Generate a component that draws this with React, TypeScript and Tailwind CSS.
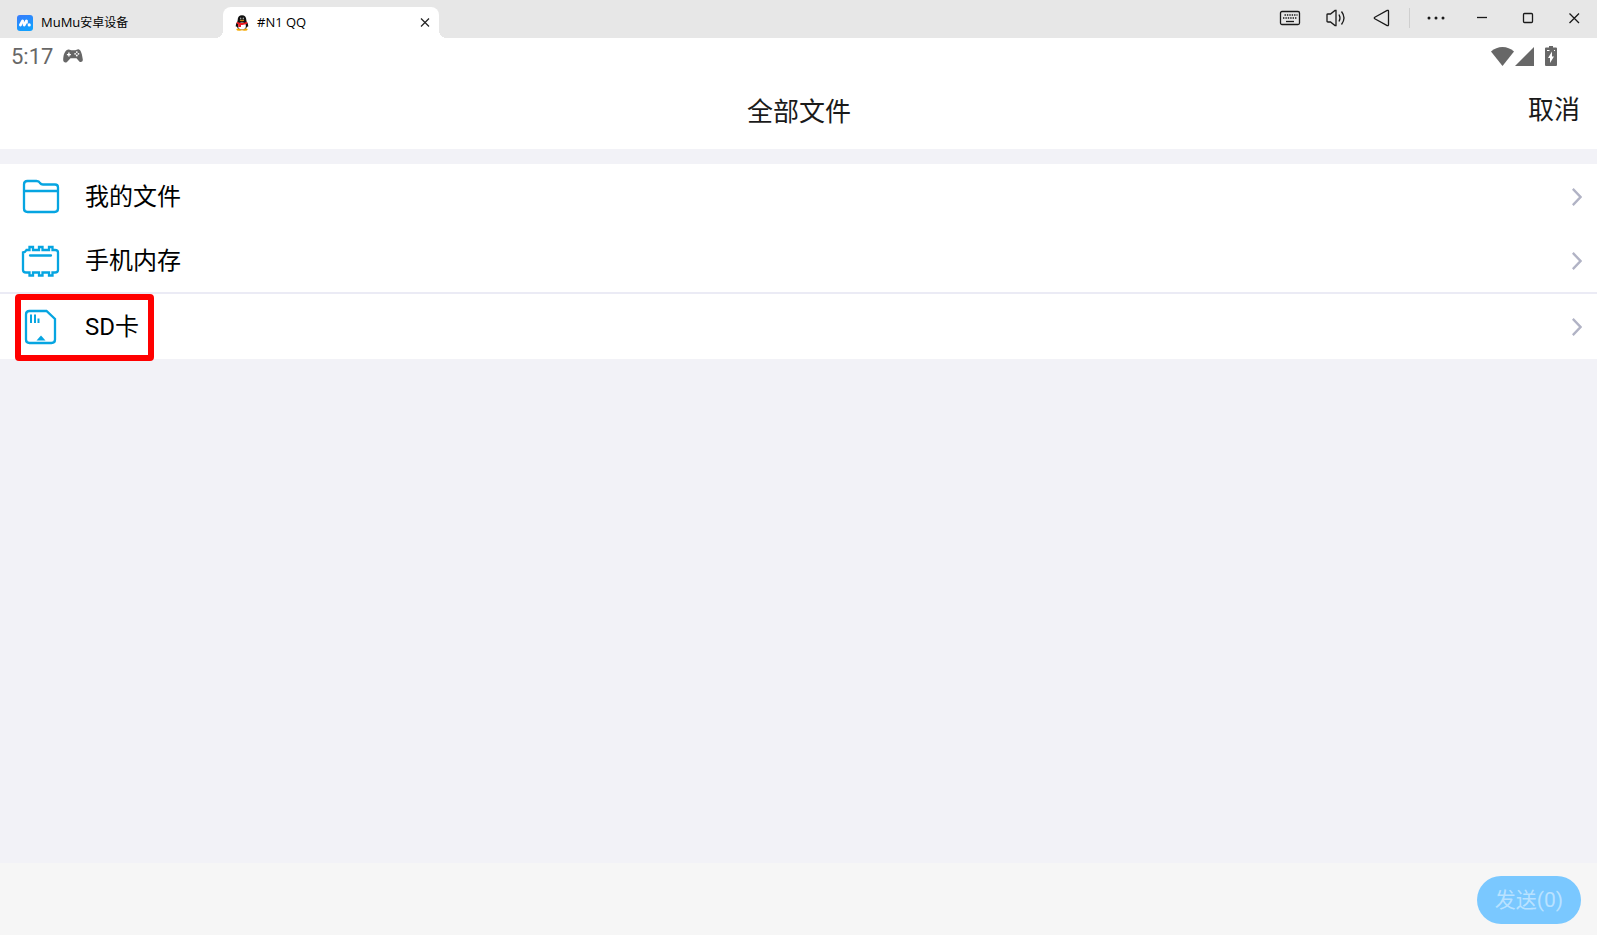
import type { ReactNode } from "react";

type FileEntry = {
  label: string;
  icon: ReactNode;
  divider?: boolean;
  highlighted?: boolean;
};

function MuMuLogo() {
  return (
    <svg width="16" height="16" viewBox="0 0 16 16" aria-hidden="true">
      <defs>
        <linearGradient id="mumu" x1="0" y1="0" x2="0.4" y2="1">
          <stop offset="0" stopColor="#3a7bfb" />
          <stop offset="1" stopColor="#12a0ff" />
        </linearGradient>
      </defs>
      <rect width="16" height="16" rx="3" fill="url(#mumu)" />
      <path d="M3.4 10L5.6 6M7.2 10L9.4 6" stroke="#fff" strokeWidth="2.8" strokeLinecap="round" />
      <path d="M5.8 5.500L7 10M9.600 5.500L10.400 8.500" stroke="#fff" strokeWidth="1.200" />
      <circle cx="12.2" cy="9.9" r="1.6" fill="#fff" />
    </svg>
  );
}

function PenguinLogo() {
  return (
    <svg width="14" height="16" viewBox="0 0 14 16" aria-hidden="true">
      <path d="M2.4 7C1.2 8.4.6 10 .8 11.6c.3.7 1-.2 1.4-.8M11.6 7c1.2 1.4 1.8 3 1.6 4.6-.3.7-1-.2-1.4-.8" fill="#111" />
      <ellipse cx="4.3" cy="14.5" rx="3" ry="1.3" fill="#f5a800" />
      <ellipse cx="9.7" cy="14.5" rx="3" ry="1.3" fill="#f5a800" />
      <path d="M7 .3c-2.800 0-4.300 2-4.300 4.400 0 1-.3 1.800-.8 2.800-1.600 4 1 7 5.100 7s6.700-3 5.100-7c-.5-1-.8-1.800-.8-2.800C11.300 2.300 9.800.3 7 .3z" fill="#111" />
      <ellipse cx="7" cy="11" rx="3.900" ry="3.400" fill="#fff" />
      <ellipse cx="5.700" cy="3.400" rx=".7" ry="1" fill="#aaa" />
      <ellipse cx="8.300" cy="3.400" rx=".7" ry="1" fill="#aaa" />
      <ellipse cx="7" cy="5.500" rx="2.300" ry=".8" fill="#c98a10" />
      <path d="M2 6.700c3.200 1.600 6.800 1.600 10 0l.5 1.900c-2.400 1.200-4.500 1.500-6.500 1.300v2H3.200V9.300L1.600 8.500z" fill="#ee1b23" />
    </svg>
  );
}

function GamepadIcon() {
  return (
    <svg width="20" height="14" viewBox="0 0 20 14" aria-hidden="true">
      <path
        d="M4.600.8C6 .2 7 1.300 8.300 1.200h4C13.500 1.200 14.500-.3 16 .5c2.300 1 3.200 5.500 3.800 10 .2 2.200-2 3.300-3.500 2L13.500 9.200h-6L4 12.900C2.300 14.300 0 13 .2 10.700.3 6.800 1.300 2 4.600.8z"
        fill="#676767"
      />
      <path d="M5.900 3.600v4M3.900 5.600h4" stroke="#fff" strokeWidth="1.400" />
      <circle cx="13.800" cy="3.100" r=".9" fill="#fff" />
      <circle cx="13.800" cy="6.500" r=".9" fill="#fff" />
      <circle cx="12.100" cy="4.800" r=".9" fill="#fff" />
      <circle cx="15.500" cy="4.800" r=".9" fill="#fff" />
    </svg>
  );
}

function FolderIcon() {
  return (
    <svg width="40" height="36" viewBox="0 0 40 36" fill="none" stroke="#06a5e1" strokeWidth="2.300" aria-hidden="true">
      <path d="M3 29.500V5.500Q3 2 6.500 2H15.500Q18 2 19 4Q20 5.500 22 5.500H34Q37 5.500 37 8.500V29.500Q37 33 33.500 33H6.500Q3 33 3 29.500Z" />
      <path d="M3 12H37" />
    </svg>
  );
}

function MemoryIcon() {
  return (
    <svg width="40" height="36" viewBox="0 0 40 36" fill="none" stroke="#06a5e1" strokeWidth="2.300" aria-hidden="true">
      <path d="M8 7H5.500Q4.500 9 2 9.500V27Q2 29.500 5 29.500H8.500V32.500H12V29.500H18V32.500H21.500V29.500H28V32.500H31.500V29.500H34Q37 29.500 37 27V9.500Q37 7 34 7H31.500V4H28V7H21.500V4H18V7H12V4H8.500V7Z" />
      <path d="M9 12.500H30" strokeLinecap="round" />
    </svg>
  );
}

function SdCardIcon() {
  return (
    <svg width="40" height="36" viewBox="0 0 40 36" fill="none" stroke="#06a5e1" strokeWidth="2.300" aria-hidden="true">
      <path d="M8.500 2H25.500L34 10V30.500Q34 34 30.500 34H8.500Q5 34 5 30.500V5.500Q5 2 8.500 2Z" />
      <path d="M10 5.500V14M14 5.500V14M17.500 9.500V14" strokeWidth="2" />
      <path d="M20 26.500L24.500 31.500H15.500Z" fill="#06a5e1" stroke="none" />
    </svg>
  );
}

function ChevronIcon() {
  return (
    <svg width="10" height="18" viewBox="0 0 10 18" fill="none" stroke="#b1b3c5" strokeWidth="2.400" aria-hidden="true">
      <path d="M.8.900L8.500 9L.8 17.100" />
    </svg>
  );
}

const deviceControls = [
  {
    label: "键盘",
    icon: (
      <>
        <rect x="2.500" y="5.500" width="19" height="13" rx="1.500" />
        <path d="M6.500 9h13" strokeWidth="1.600" strokeDasharray="1.400 1" />
        <path d="M5 12h14" strokeWidth="1.600" strokeDasharray="1.400 1" />
        <path d="M8 15.500h8" />
      </>
    ),
  },
  {
    label: "音量",
    icon: (
      <>
        <path d="M3 8.500V15.500Q3 16 4 16H6.500L11 19.500H12V4.500H11L6.500 8H4Q3 8 3 8.500Z" />
        <path d="M15 8.500Q17 12 15 15.500M17.500 5.500Q22.500 12 17.500 18.500" />
      </>
    ),
  },
  {
    label: "返回",
    icon: <path d="M4.800 11.200L17.200 4.400Q18.500 4 18.500 5.200V18.800Q18.500 20 17.200 19.600L4.800 12.800Q3.800 12 4.800 11.200Z" />,
  },
];

const windowControls = [
  {
    label: "更多",
    icon: (
      <g fill="#1a1a1a" stroke="none">
        <circle cx="5" cy="12" r="1.500" />
        <circle cx="12" cy="12" r="1.500" />
        <circle cx="19" cy="12" r="1.500" />
      </g>
    ),
  },
  { label: "最小化", icon: <path d="M7 11.500H17" /> },
  { label: "最大化", icon: <rect x="7.500" y="7.500" width="9" height="9" rx="1" /> },
  { label: "关闭", icon: <path d="M7.500 7.500L17 17M17 7.500L7.500 17" /> },
];

const entries: FileEntry[] = [
  { label: "我的文件", icon: <FolderIcon /> },
  { label: "手机内存", icon: <MemoryIcon />, divider: true },
  { label: "SD卡", icon: <SdCardIcon />, highlighted: true },
];

function ControlButton({ label, children }: { label: string; children: ReactNode }) {
  return (
    <button type="button" aria-label={label} className="flex h-9 w-[46px] items-center justify-center">
      <svg width="24" height="24" viewBox="0 0 24 24" fill="none" stroke="#1a1a1a" strokeWidth="1.300" aria-hidden="true">
        {children}
      </svg>
    </button>
  );
}

function TitleBar() {
  return (
    <div className="flex h-[38px] justify-between bg-[#e7e7e7] font-['Open_Sans','Noto_Sans_CJK_SC',sans-serif] text-black">
      <div className="flex items-end">
        <button type="button" className="flex h-[31px] w-[223px] items-center gap-2 pl-[17px] text-xs">
          <MuMuLogo />
          <span>
            <span className="text-[13px]">MuMu</span>安卓设备
          </span>
        </button>
        <div className="relative flex h-[31px] w-[216px] items-center justify-between rounded-t-lg bg-white pr-2 pl-3">
          <span className="absolute bottom-0 -left-2 size-2 bg-[radial-gradient(circle_at_0_0,transparent_8px,white_8px)]" />
          <span className="absolute -right-2 bottom-0 size-2 bg-[radial-gradient(circle_at_100%_0,transparent_8px,white_8px)]" />
          <button type="button" className="flex items-center gap-2 text-[13px]">
            <PenguinLogo />
            <span>#N1 QQ</span>
          </button>
          <button type="button" aria-label="关闭标签">
            <svg width="12" height="12" viewBox="0 0 12 12" stroke="#222" strokeWidth="1.200" aria-hidden="true">
              <path d="M2 1.500L10 9.500M10 1.500L2 9.500" />
            </svg>
          </button>
        </div>
      </div>

      <div className="flex items-start">
        {deviceControls.map(({ label, icon }) => (
          <ControlButton key={label} label={label}>
            {icon}
          </ControlButton>
        ))}
        <span className="mr-[3px] ml-1 mt-2 h-5 w-px bg-[#cfcfcf]" />
        {windowControls.map(({ label, icon }) => (
          <ControlButton key={label} label={label}>
            {icon}
          </ControlButton>
        ))}
      </div>
    </div>
  );
}

function StatusBar() {
  return (
    <div className="flex h-9 items-center justify-between bg-white pr-10 pl-[11px] text-[#676767]">
      <div className="flex items-center gap-[10px]">
        <span className="pt-px text-[22px] leading-9">5:17</span>
        <GamepadIcon />
      </div>
      <div className="flex items-center gap-px pb-px">
        <svg width="23" height="20" viewBox="0 0 23 20" fill="#676767" aria-hidden="true">
          <path d="M11.500 20L0 5.500Q5 1 11.500 1T23 5.500Z" />
        </svg>
        <svg width="19" height="20" viewBox="0 0 19 20" fill="#676767" aria-hidden="true">
          <path d="M0 20H19V1Z" />
        </svg>
        <svg width="12" height="20" viewBox="0 0 12 20" fill="#676767" className="ml-[10px]" aria-hidden="true">
          <path d="M4 0H8V1.500H11Q12 1.500 12 2.500V19Q12 20 11 20H1Q0 20 0 19V2.500Q0 1.500 1 1.500H4Z" />
          <path d="M7 5.500V10.500H9L5 17V12H3Z" fill="#fff" />
          <path d="M2 4.500H4.500M9 4.500H10" stroke="#fff" />
        </svg>
      </div>
    </div>
  );
}

function FileRow({ label, icon, divider, highlighted }: FileEntry) {
  return (
    <li className={`relative bg-white ${divider ? "border-b-2 border-[#ebebf5]" : ""}`}>
      <button
        type="button"
        className={`flex w-full items-center gap-6 pr-[15px] pl-[21px] text-left ${divider ? "h-[63px]" : "h-[65px]"}`}
      >
        {icon}
        <span className="flex-1 text-2xl text-black">{label}</span>
        <ChevronIcon />
      </button>
      {highlighted && (
        <span className="pointer-events-none absolute top-0 left-[15px] h-[67px] w-[139px] rounded border-6 border-[#ff0000]" />
      )}
    </li>
  );
}

export default function App() {
  return (
    <div className="flex min-h-screen flex-col bg-[#f2f2f7] font-[Roboto,'Noto_Sans_CJK_SC',sans-serif]">
      <TitleBar />
      <StatusBar />

      <header className="grid h-[75px] grid-cols-[1fr_auto_1fr] items-center bg-white pr-[17px] text-[26px] leading-[38px] text-[#1a1a1a]">
        <h1 className="col-start-2 pl-[18px]">全部文件</h1>
        <button type="button" className="justify-self-end pb-1">
          取消
        </button>
      </header>

      <main className="flex-1 pt-[15px]">
        <ul>
          {entries.map((entry) => (
            <FileRow key={entry.label} {...entry} />
          ))}
        </ul>
      </main>

      <footer className="flex h-[72px] items-center justify-end bg-[#f6f6f6] pt-0.5 pr-4">
        <button type="button" className="h-12 w-[104px] rounded-full bg-[#7ac8ff] pt-0.5 text-[21px] text-[#b9e2ff]">
          发送(0)
        </button>
      </footer>
    </div>
  );
}
